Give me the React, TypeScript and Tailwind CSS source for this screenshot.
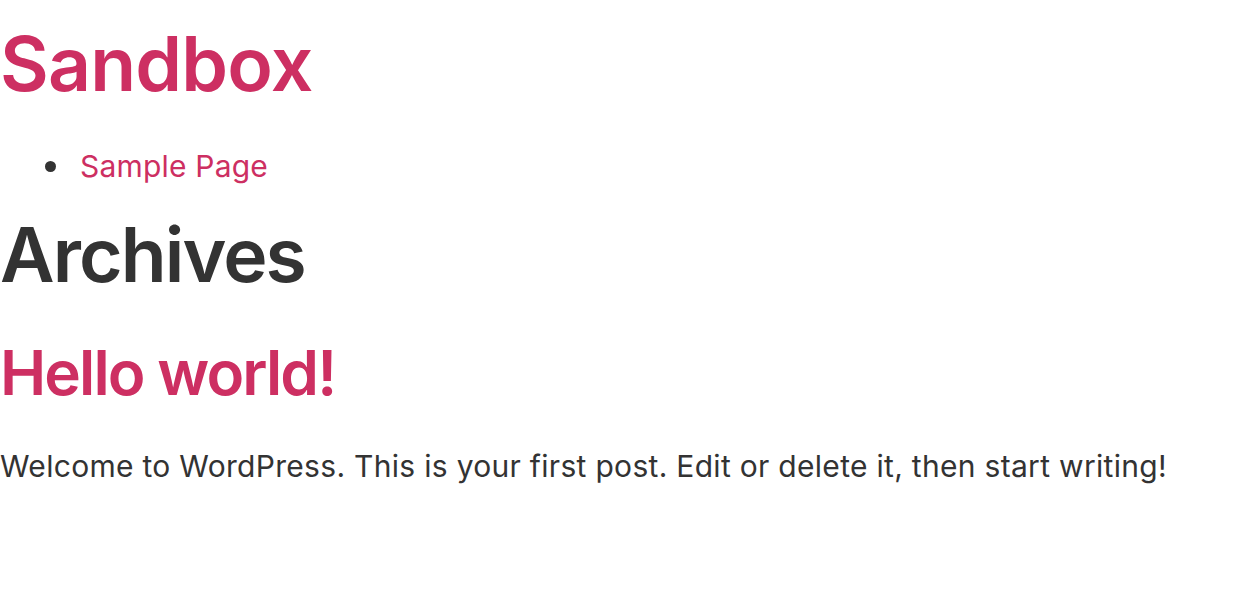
export default function App() {
  return (
    <div className="bg-white min-h-[594px] text-[#333333]" style={{ fontFamily: "Inter, 'Noto Sans', sans-serif" }}>
      <h1 className="text-[75px] leading-[92px] pt-[18px] font-semibold tracking-[-0.8px] text-[#cd2f62]">
        <a href="#">Sandbox</a>
      </h1>
      <ul className="mt-[38px] text-[30px] leading-[36px]">
        <li className="flex items-center">
          <span className="ml-[45px] mr-[24px] w-[11px] h-[11px] rounded-full bg-[#333333]" />
          <a href="#" className="text-[#cd2f62] tracking-[0.2px]">Sample Page</a>
        </li>
      </ul>
      <h1 className="text-[75px] leading-[92px] mt-[25px] font-semibold tracking-[-1.9px] text-[#333333]">Archives</h1>
      <h2 className="text-[62px] leading-[76px] mt-[34px] font-semibold tracking-[-1.9px] text-[#cd2f62]">
        <a href="#">Hello world!</a>
      </h2>
      <p className="text-[30px] leading-[34px] mt-[38px] tracking-[0.3px] text-[#333333]">
        Welcome to WordPress. This is your first post. Edit or delete it, then start writing!
      </p>
    </div>
  );
}
